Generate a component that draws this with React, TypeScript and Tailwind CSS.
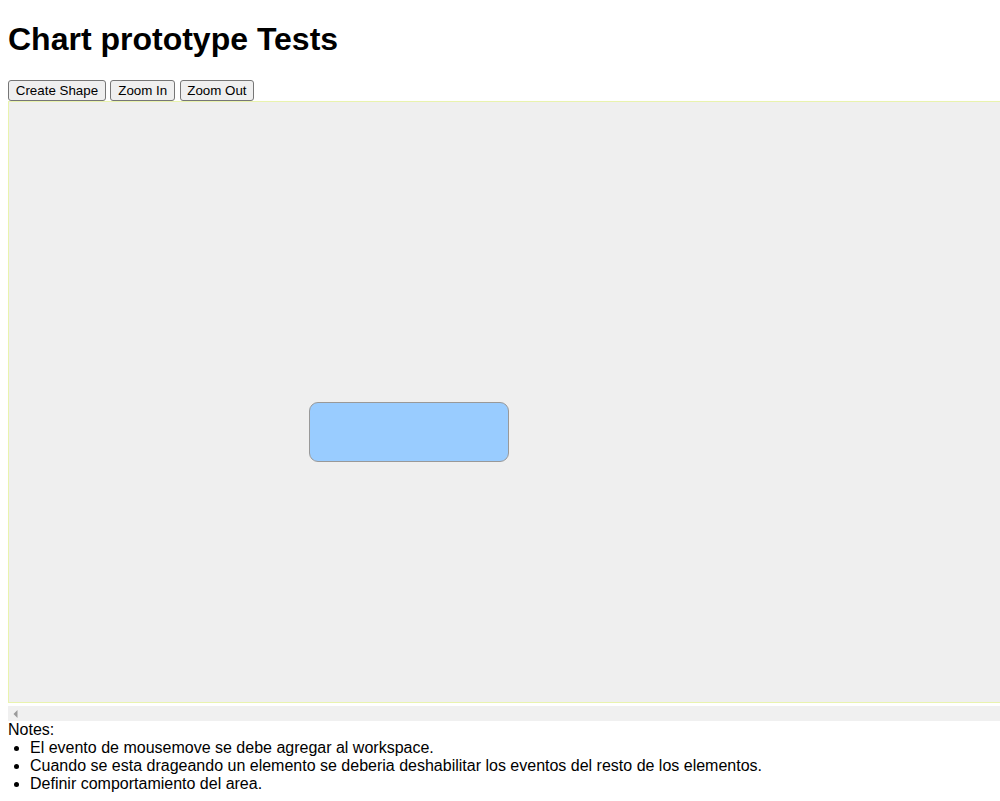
import React from "react";

export default function App() {
  const btn =
    "bg-[#efefef] border border-[#767676] rounded-[3px] px-[6.8px] py-[2px] text-[13.33px] leading-[15.33px] text-black";
  return (
    <div
      className="pl-[8px] bg-white text-black overflow-hidden"
      style={{ fontFamily: '"Liberation Sans", Arial, sans-serif' }}
    >
      <h1 className="text-[32px] font-bold leading-[36.8px] mt-[21.44px] mb-[21.44px] pt-0">
        Chart prototype Tests
      </h1>
      <div className="flex gap-[4.6px] h-[21.33px] items-start">
        <button className={btn}>Create Shape</button>
        <button className={btn}>Zoom In</button>
        <button className={btn}>Zoom Out</button>
      </div>
      <div className="w-[992px] overflow-hidden">
        <div className="w-[1200px] h-[602px] border border-[#e9f3ae] bg-[#efefef] relative">
          <div className="absolute left-[300px] top-[300px] w-[200px] h-[60px] bg-[#99ccff] border border-[#999999] rounded-[9px]" />
        </div>
        <div className="mt-[3px] h-[15px] bg-[#f0f0f0] flex items-center pl-[5px]">
          <svg width="5" height="8" viewBox="0 0 5 8">
            <polygon points="4.5,0 4.5,8 0.5,4" fill="#9a9a9a" />
          </svg>
        </div>
      </div>
      <div className="text-[16px] leading-[18px]">
        <div>Notes:</div>
        <ul className="list-disc pl-[22px] m-0">
          <li>El evento de mousemove se debe agregar al workspace.</li>
          <li>
            Cuando se esta drageando un elemento se deberia deshabilitar los eventos del resto de
            los elementos.
          </li>
          <li>Definir comportamiento del area.</li>
        </ul>
      </div>
    </div>
  );
}
